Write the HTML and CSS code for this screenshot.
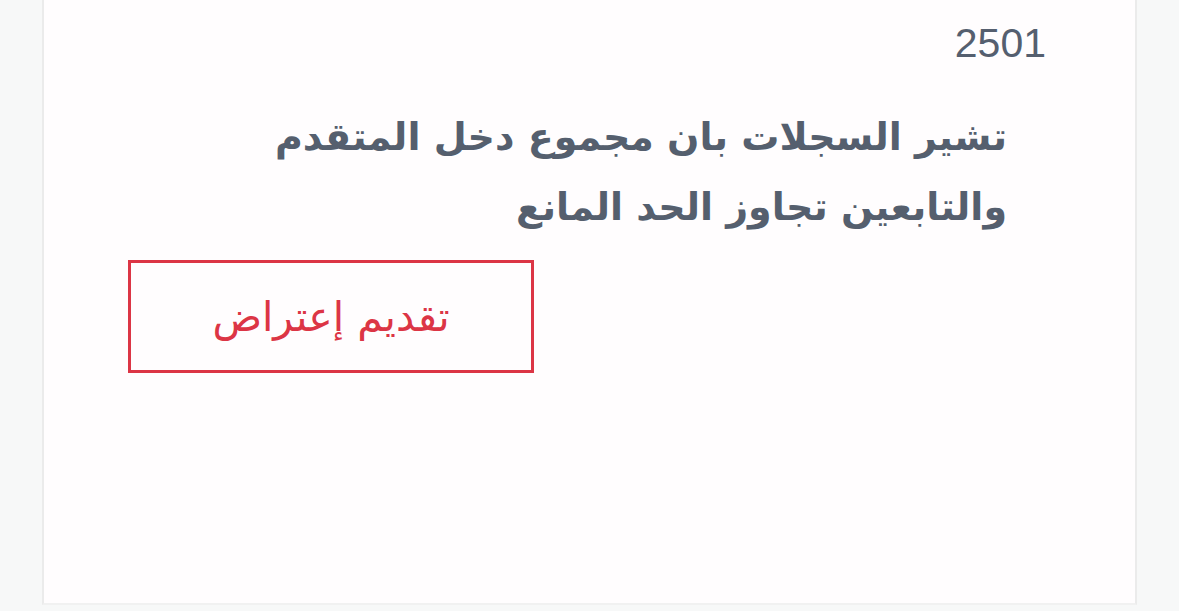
FILE: index.html
```html
<!DOCTYPE html>
<html lang="ar" dir="rtl">
<head>
    <meta charset="UTF-8">
    <meta name="viewport" content="width=device-width, initial-scale=1.0">
    <title>الاعتراض</title>
    <link rel="stylesheet" href="styles.css">
</head>
<body>
    <div class="page">
        <div class="card">
            <div class="code">2501</div>
            <p class="message">تشير السجلات بان مجموع دخل المتقدم والتابعين تجاوز الحد المانع</p>
            <button class="objection">تقديم إعتراض</button>
        </div>
    </div>
</body>
</html>
```

FILE: styles.css
```css
body {
    margin: 0;
    background-color: #f7f8f8;
    font-family: "DejaVu Sans", "Liberation Sans", sans-serif;
    overflow: hidden;
}

.page {
    padding: 0 42px;
}

.card {
    display: flex;
    flex-direction: column;
    align-items: flex-start;
    height: 605px;
    box-sizing: border-box;
    background-color: #fffdfe;
    border-left: 2px solid #ebebeb;
    border-right: 2px solid #ebebeb;
    border-bottom: 2px solid #f1f1f1;
}

.code {
    margin: 18px 89px 0 0;
    font-family: "Liberation Sans", Arial, sans-serif;
    font-size: 41px;
    line-height: 50px;
    color: #555f6f;
}

.message {
    max-width: 800px;
    margin: 34px 128px 0 0;
    font-size: 38px;
    font-weight: bold;
    line-height: 70px;
    color: #555f6e;
}

.objection {
    align-self: flex-end;
    margin: 18px 0 0 84px;
    width: 406px;
    height: 113px;
    background: transparent;
    border: 3px solid #dc3545;
    color: #dc3545;
    font-family: "DejaVu Sans", sans-serif;
    font-size: 41px;
    cursor: pointer;
}
```
